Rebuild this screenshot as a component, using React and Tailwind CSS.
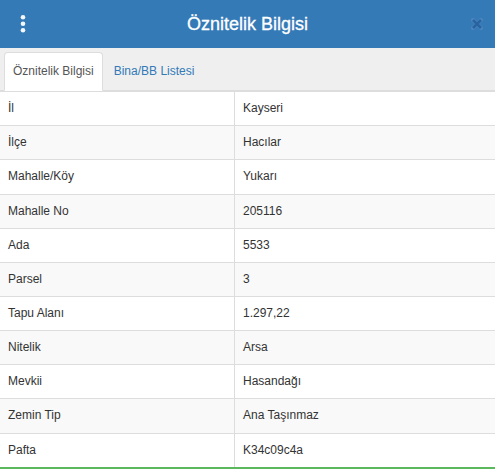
import React from "react";

const rows = [
  ["İl", "Kayseri"],
  ["İlçe", "Hacılar"],
  ["Mahalle/Köy", "Yukarı"],
  ["Mahalle No", "205116"],
  ["Ada", "5533"],
  ["Parsel", "3"],
  ["Tapu Alanı", "1.297,22"],
  ["Nitelik", "Arsa"],
  ["Mevkii", "Hasandağı"],
  ["Zemin Tip", "Ana Taşınmaz"],
  ["Pafta", "K34c09c4a"],
];

export default function App() {
  return (
    <div className="w-[495px] bg-white font-['Liberation_Sans',Arial,sans-serif] text-[#333]">
      {/* Header */}
      <div className="grid h-12 grid-cols-[1fr_auto_1fr] items-center bg-[#337ab7]">
        <div className="flex items-center pl-[20px]">
          <svg width="6" height="20" viewBox="0 0 6 20" className="block">
            <circle cx="3" cy="3.2" r="2.3" fill="#f4f7fb" />
            <circle cx="3" cy="9.7" r="2.3" fill="#f4f7fb" />
            <circle cx="3" cy="16.2" r="2.3" fill="#f4f7fb" />
          </svg>
        </div>
        <div className="text-[18px] font-medium leading-none text-white [-webkit-text-stroke:0.3px_#fff]">
          Öznitelik Bilgisi
        </div>
        <div className="flex justify-end pr-[12px]">
          <svg width="12" height="12" viewBox="0 0 12 12" className="block">
            <path d="M2 2 L10 10 M10 2 L2 10" stroke="#4a86bf" strokeWidth="4" strokeLinecap="round" />
            <path d="M2 2 L10 10 M10 2 L2 10" stroke="#2a64a0" strokeWidth="2.8" strokeLinecap="butt" />
          </svg>
        </div>
      </div>

      {/* Tabs */}
      <div className="flex border-b border-[#ddd] bg-[#efefef] px-1 pt-1 text-[12px] leading-[1.42857]">
        <div className="-mb-px rounded-t-[4px] border border-[#ddd] border-b-transparent bg-white px-2 py-[10px] text-[#555]">
          Öznitelik Bilgisi
        </div>
        <div className="-mb-px ml-[2px] border border-transparent px-2 py-[10px] text-[#337ab7]">
          Bina/BB Listesi
        </div>
      </div>

      {/* Table */}
      <div className="text-[12px] leading-[1.42857]">
        {rows.map(([k, v], i) => (
          <div
            key={k}
            className={
              "grid grid-cols-[235px_1fr] border-t border-[#ddd] " +
              (i % 2 === 1 ? "bg-[#f9f9f9]" : "bg-white")
            }
          >
            <div className="border-r border-[#ddd] px-2 py-2">{k}</div>
            <div className="px-2 py-2">{v}</div>
          </div>
        ))}
      </div>
      <div className="h-[2px] bg-[#5cb85c]" />
    </div>
  );
}
